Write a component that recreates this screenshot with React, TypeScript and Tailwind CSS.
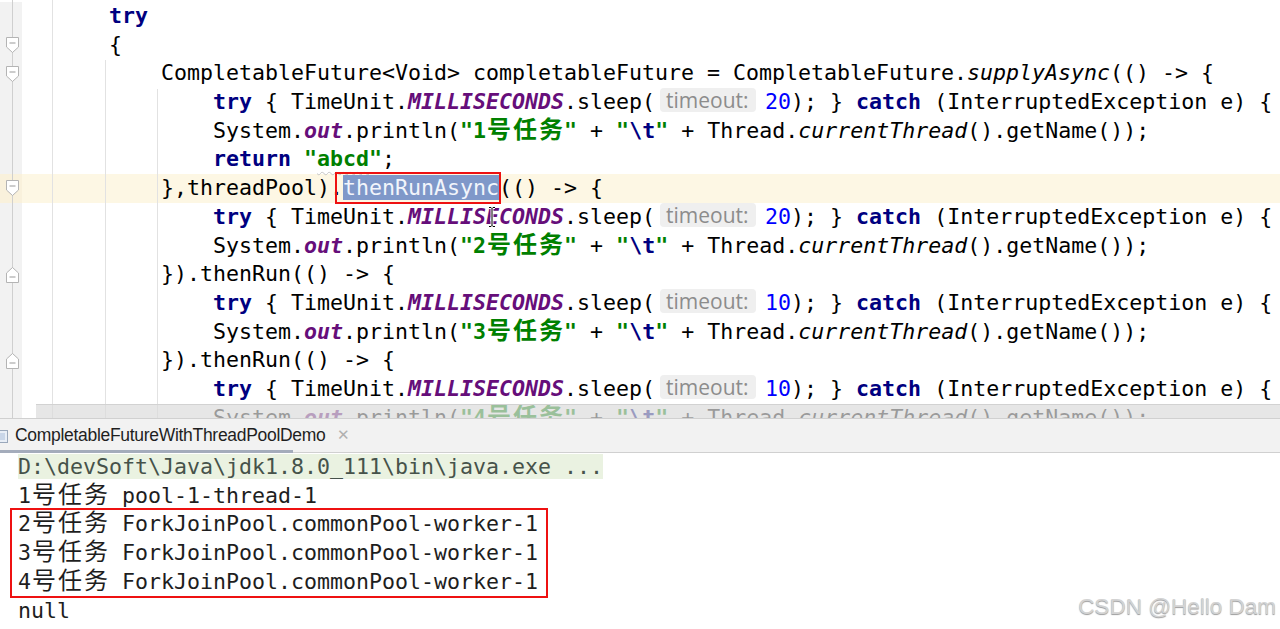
import React from "react";

type Kids = { children: React.ReactNode };

const K = ({ children }: Kids) => <span className="font-bold text-[#000080]">{children}</span>;
const S = ({ children }: Kids) => <span className="font-bold text-[#008000]">{children}</span>;
const N = ({ children }: Kids) => <span className="text-[#0000ff]">{children}</span>;
const F = ({ children }: Kids) => <span className="italic font-bold text-[#660e7a]">{children}</span>;
const I = ({ children }: Kids) => <span className="italic">{children}</span>;

// CJK glyphs take two columns in the editor
function Wide({ text }: { text: string }) {
  return (
    <>
      {Array.from(text).map((c, i) => (
        <span key={i} className="inline-block w-[26px] text-center text-[24px] leading-[20px]">
          {c}
        </span>
      ))}
    </>
  );
}

const Hint = () => (
  <span className="inline-block ml-[5px] mr-[9px] w-[96px] rounded-[4px] bg-[#efefef] pl-[6px] align-[1px] font-['Open_Sans',sans-serif] text-[21px] leading-[24px] font-normal not-italic text-[#8c8c8c]">
    timeout:
  </span>
);

const I8 = "        ";
const I12 = "            ";
const I16 = "                ";

const sleepLine = (ms: string) => (
  <>
    {I16}
    <K>try</K>
    {" { TimeUnit."}
    <F>MILLISECONDS</F>
    {".sleep("}
    <Hint />
    <N>{ms}</N>
    {"); } "}
    <K>catch</K>
    {" (InterruptedException e) {"}
  </>
);

const printLine = (n: string) => (
  <>
    {I16}
    {"System."}
    <F>out</F>
    {".println("}
    <S>
      {'"' + n}
      <Wide text="号任务" />
      {'"'}
    </S>
    {" + "}
    <S>
      {'"'}
      <K>{"\\t"}</K>
      {'"'}
    </S>
    {" + Thread."}
    <I>currentThread</I>
    {"().getName());"}
  </>
);

type Row = { marker?: "down" | "up"; current?: boolean; body: React.ReactNode };

const rows: Row[] = [
  { body: <>{I8}<K>try</K></> },
  { marker: "down", body: <>{I8}{"{"}</> },
  {
    marker: "down",
    body: (
      <>
        {I12}
        {"CompletableFuture<Void> completableFuture = CompletableFuture."}
        <I>supplyAsync</I>
        {"(() -> {"}
      </>
    ),
  },
  { body: sleepLine("20") },
  { body: printLine("1") },
  {
    body: (
      <>
        {I16}
        <K>return</K> <S>{'"'}<span className="underline decoration-wavy decoration-[#c4c4c4] decoration-1 underline-offset-[5px]">abcd</span>{'"'}</S>;
      </>
    ),
  },
  {
    marker: "down",
    current: true,
    body: (
      <>
        {I12}
        {"},threadPool)."}
        <span className="relative bg-[#7f98c9] text-[#f2f5fb]">
          thenRunAsync
          <span className="absolute left-[-8px] right-[-2px] top-[-3px] bottom-[-4px] border-2 border-[#ee1111]" />
        </span>
        {"(() -> {"}
      </>
    ),
  },
  { body: sleepLine("20") },
  { body: printLine("2") },
  { marker: "up", body: <>{I12}{"}).thenRun(() -> {"}</> },
  { body: sleepLine("10") },
  { body: printLine("3") },
  { marker: "up", body: <>{I12}{"}).thenRun(() -> {"}</> },
  { body: sleepLine("10") },
  { body: printLine("4") },
];

function FoldMark({ dir }: { dir: "down" | "up" }) {
  return (
    <svg className="relative ml-[5px]" width="15" height="18" viewBox="0 0 15 18">
      {dir === "down" ? (
        <>
          <path d="M1.5 1.5H13.5V11L7.5 16.5L1.5 11Z" fill="#ffffff" stroke="#b4b4b4" />
          <path d="M4.5 7H10.5" stroke="#999999" />
        </>
      ) : (
        <>
          <path d="M1.5 16.5H13.5V7L7.5 1.5L1.5 7Z" fill="#ffffff" stroke="#b4b4b4" />
          <path d="M4.5 11H10.5" stroke="#999999" />
        </>
      )}
    </svg>
  );
}

const mono = "font-['DejaVu_Sans_Mono','Noto_Sans_CJK_SC',monospace] text-[21.6px] leading-[28.7px]";

function Editor() {
  return (
    <div className="relative h-[418px] overflow-hidden bg-white pt-[2px]">
      <div className="absolute left-[12px] top-0 bottom-0 w-px bg-[#cfcfcf]" />
      <div className="absolute left-[52px] top-0 bottom-0 w-px bg-[#e2e2e2]" />
      <div className="absolute left-[105px] top-[60px] bottom-0 w-px bg-[#e2e2e2]" />
      <div className="absolute left-[157px] top-[89px] bottom-0 w-px bg-[#e2e2e2]" />
      {rows.map((r, i) => (
        <div key={i} className={r.current ? "flex h-[28.7px] bg-[#fdf7e4]" : "flex h-[28.7px]"}>
          <div
            className={
              r.current
                ? "flex w-[22px] shrink-0 items-center bg-[#f9f1dc]"
                : "flex w-[22px] shrink-0 items-center bg-[#f2f2f2]"
            }
          >
            {r.marker && <FoldMark dir={r.marker} />}
          </div>
          <div className={`-ml-[17px] whitespace-pre text-black ${mono}`}>{r.body}</div>
        </div>
      ))}
      {/* mouse I-beam */}
      <svg className="absolute left-[487px] top-[206px]" width="10" height="22" viewBox="0 0 10 22">
        <path d="M2 1.5H4L5 2.5L6 1.5H8M5 2.5V19.5M2 20.5H4L5 19.5L6 20.5H8" fill="none" stroke="#ffffff" strokeWidth="3" />
        <path d="M2 1.5H4L5 2.5L6 1.5H8M5 2.5V19.5M2 20.5H4L5 19.5L6 20.5H8" fill="none" stroke="#000000" strokeWidth="1" />
      </svg>
      <div className="absolute bottom-0 left-[36px] right-0 h-[14px] border-t border-[#d2d2d2] bg-[#dcdcdc]/70" />
    </div>
  );
}

function TabBar() {
  return (
    <div className="relative flex h-[35px] items-center border-t border-b border-[#d0d0d0] bg-[#f2f2f2]">
      <svg className="absolute left-[-4px] top-[11px]" width="12" height="13" viewBox="0 0 12 13">
        <rect x="0.5" y="0.5" width="11" height="12" fill="#e8eef6" stroke="#9aa8bb" />
        <rect x="3" y="3" width="6" height="7" fill="#c9d6e8" />
      </svg>
      <span className="pl-[15px] font-['Liberation_Sans',sans-serif] text-[17.5px] tracking-[-0.3px] text-[#1f1f1f]">
        CompletableFutureWithThreadPoolDemo
      </span>
      <span className="ml-[12px] font-['Liberation_Sans',sans-serif] text-[15px] text-[#b0b0b0]">✕</span>
      <div className="absolute bottom-[-1px] left-0 h-[3px] w-[293px] bg-[#a4acbb]" />
    </div>
  );
}

function ConsoleLine({ n, thread }: { n: string; thread: string }) {
  return (
    <div className="whitespace-pre">
      {n}
      <Wide text="号任务" />
      {" " + thread}
    </div>
  );
}

function Console() {
  return (
    <div className={`pl-[18px] text-[#1e1e1e] ${mono}`}>
      <div className="whitespace-pre">
        <span className="bg-[#eaf2e1] text-[#46524a]">{"D:\\devSoft\\Java\\jdk1.8.0_111\\bin\\java.exe ..."}</span>
      </div>
      <ConsoleLine n="1" thread="pool-1-thread-1" />
      <div className="relative">
        <ConsoleLine n="2" thread="ForkJoinPool.commonPool-worker-1" />
        <ConsoleLine n="3" thread="ForkJoinPool.commonPool-worker-1" />
        <ConsoleLine n="4" thread="ForkJoinPool.commonPool-worker-1" />
        <div className="absolute left-[-8px] top-[-2px] bottom-[-1px] w-[538px] border-2 border-[#ee1111]" />
      </div>
      <div className="whitespace-pre">null</div>
    </div>
  );
}

export default function App() {
  return (
    <div className="relative h-[629px] w-[1280px] overflow-hidden bg-white">
      <Editor />
      <TabBar />
      <Console />
      <div className="absolute right-[4px] top-[594px] font-['Liberation_Sans',sans-serif] text-[22.5px] leading-[26px] text-[#d3d3d3] [text-shadow:0_1px_1px_#9c9c9c]">
        CSDN @Hello Dam
      </div>
    </div>
  );
}
